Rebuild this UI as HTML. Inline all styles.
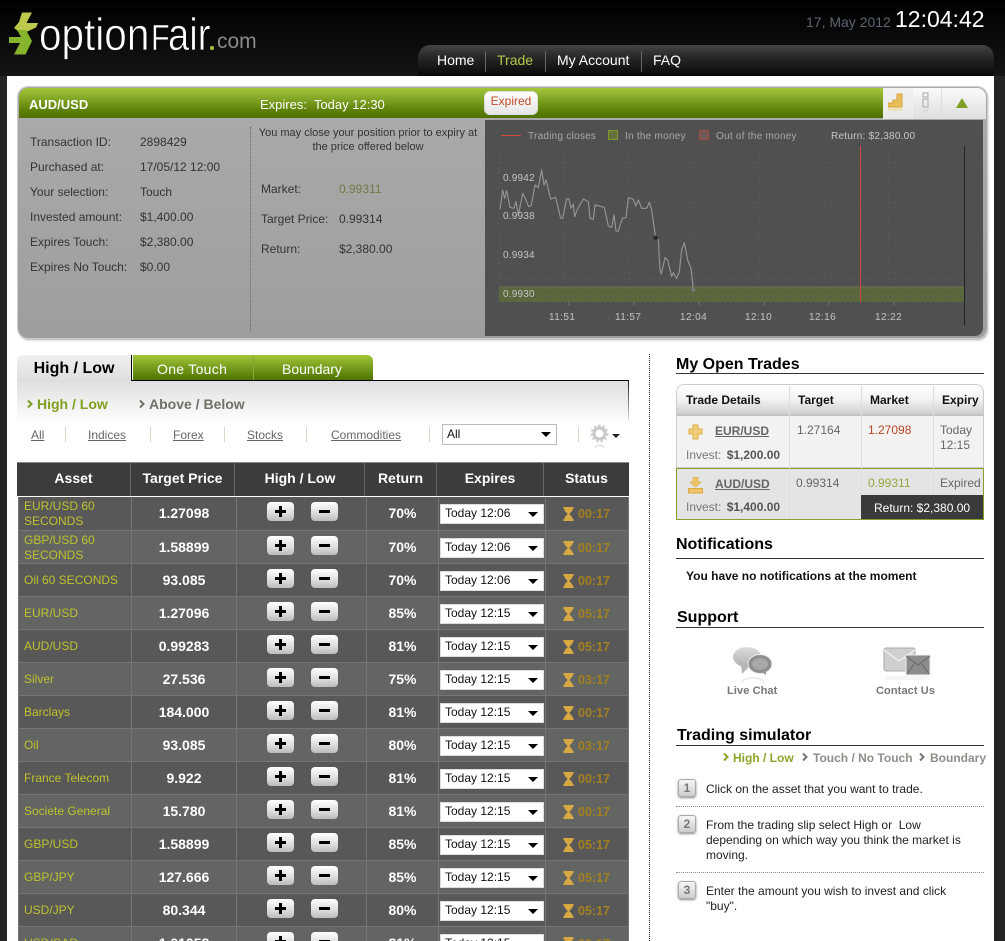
<!DOCTYPE html>
<html><head><meta charset="utf-8"><title>optionFair</title>
<style>
*{box-sizing:border-box}
html,body{margin:0;padding:0;overflow:hidden;width:1005px;height:941px}
body{background:#242424;font-family:"Liberation Sans",sans-serif;font-size:12px;color:#333}
#root{position:relative;width:1005px;height:941px;overflow:hidden;background:#242424}
.a{position:absolute;white-space:nowrap}
#hd{position:absolute;left:0;top:0;width:1005px;height:76px;background:linear-gradient(#000,#141414)}
#nav{position:absolute;left:418px;top:45px;width:576px;height:31px;border-radius:12px 12px 0 0;background:linear-gradient(#444,#2a2a2a 35%,#080808)}
#nav span{position:absolute;top:7px;font-size:14px;color:#fff}
#nav i{position:absolute;top:6px;width:1px;height:21px;background:#666}
#wh{position:absolute;left:7px;top:76px;width:987px;height:865px;background:#fff}
#panel{position:absolute;left:18px;top:87px;width:969px;height:251px;border-radius:10px;background:linear-gradient(#ababab,#9e9e9e);box-shadow:0 0 0 1px #ccc,1px 2px 2px #aaa;overflow:hidden}
#green{position:absolute;left:1px;top:1px;width:864px;height:30px;background:linear-gradient(#a3c739,#8bb02c 25%,#5d8008 75%,#4f6f00);border-radius:9px 0 0 0}
#chart{position:absolute;left:467px;top:33px;width:498px;height:216px;background:#505050;border-radius:0 0 8px 0}
.t1{font-size:12px;color:#333}
h3{position:absolute;margin:0;left:676px;font-size:16px;font-weight:bold;color:#000;line-height:18px;white-space:nowrap}
.rule{position:absolute;left:676px;width:308px;height:1px;background:#333}
#tb{position:absolute;left:17px;top:380px;width:612px;height:82px;background:linear-gradient(#dedede,#f4f4f4 35%,#fff 55%)}
.lnk{position:absolute;top:428px;color:#666;text-decoration:underline;font-size:12px}
.sep{position:absolute;top:427px;width:1px;height:15px;background:#d8d8c8}
#th{position:absolute;left:17px;top:462px;width:612px;height:34px;background:#3c3c3c;border-top:1px solid #888}
#th span{position:absolute;top:7px;color:#fff;font-weight:bold;font-size:14px;text-align:center}
#th i{position:absolute;top:0;width:1px;height:33px;background:#666}
table{position:absolute;left:18px;top:497px;width:610px;border-collapse:collapse;table-layout:fixed}
td{height:33px;padding:0;border:1px solid #757575;border-top:0;vertical-align:middle;position:relative}
tr:nth-child(odd) td{background:#585858}
tr:nth-child(even) td{background:#626562}
.n{color:#bfc22e;font-size:12px;line-height:15px;padding:2px 0 0 5px}
.v{color:#fff;font-weight:bold;font-size:14px;text-align:center}
.r{color:#fff;font-weight:bold;font-size:14px;text-align:center}
.btn{position:absolute;top:5px;width:27px;height:19px;border-radius:4px;background:linear-gradient(#fff,#dcdcdc 60%,#bbb)}
.btn.p{left:30px}.btn.m{left:74px}
.btn:before{content:"";position:absolute;left:8px;top:8px;width:11px;height:3px;background:#000}
.btn.p:after{content:"";position:absolute;left:12px;top:4px;width:3px;height:11px;background:#000}
.s{position:absolute;left:1px;top:7px;width:104px;height:20px;background:#fff;color:#111;font-size:12px;line-height:17px;padding-left:4px;border:1px solid #ddd}
.s:after{content:"";position:absolute;right:5px;top:7px;border:5px solid transparent;border-top:5px solid #000;border-bottom:0}
.hg{position:absolute;left:17px;top:10px;width:11px;height:14px}
.st{position:absolute;left:32px;top:10px;font-size:12.500px;font-weight:bold;color:#a3801f}
.c{position:absolute;color:#666;font-size:12px;white-space:nowrap}
.step{position:absolute;left:678px;width:18px;height:18px;border-radius:3px;border:1px solid #aaa;background:linear-gradient(#f6f6f6,#ccc);box-shadow:0 1px 2px #888;font-size:12px;font-weight:bold;color:#777;text-align:center;line-height:16px}
.stx{position:absolute;left:706px;width:270px;color:#222;font-size:12px;line-height:15px}
.dot{position:absolute;left:676px;width:308px;border-top:1px dotted #888}
.gl{stroke:#5a5a5a;stroke-width:1;stroke-dasharray:2 3;fill:none}
.lg{position:absolute;top:11px;font-size:10px;color:#a4a8ae;line-height:12px;letter-spacing:.25px;white-space:nowrap}
.yl{position:absolute;left:18px;font-size:10px;line-height:12px;color:#c4c4c4;letter-spacing:.2px}
.xl{position:absolute;top:192px;font-size:10px;line-height:12px;color:#c4c4c4;letter-spacing:.4px}
.cv{position:absolute;width:6px;height:8px;overflow:visible}
</style></head><body>
<div id="root">
<svg width="0" height="0" style="position:absolute"><defs><symbol id="hg" viewBox="0 0 11 15"><path d="M0 0H11V2H10C10 5 7 6 6.500 7.500C7 9 10 10 10 13H11V15H0V13H1C1 10 4 9 4.500 7.500C4 6 1 5 1 2H0Z" fill="#d7a844"/></symbol></defs></svg>

<div id="hd">
 <svg class="a" style="left:8px;top:11px" width="34" height="45" viewBox="0 0 34 45"><polygon points="14,1.500 24,1.500 18.500,12 30,12 28,16.500 14,23 6,17 11,11" fill="#bcc94a"/><polygon points="1,26 13,26 9,19 18,19 24,30 17.500,43.500 6,43.500 12,32 1,32" fill="#86b52c"/></svg>
 <div class="a" style="left:39px;top:12px;color:#fff;line-height:46px;font-size:45px;-webkit-text-stroke:.7px #0c0c0c;transform:scaleX(.9);transform-origin:0 0">option</div>
 <div class="a" style="left:151px;top:15px;color:#fff;line-height:46px;font-size:36px;-webkit-text-stroke:.5px #0c0c0c;transform:scaleX(.85);transform-origin:0 0">F</div>
 <div class="a" style="left:168px;top:12px;color:#fff;line-height:46px;font-size:45px;-webkit-text-stroke:.7px #0c0c0c;transform:scaleX(.85);transform-origin:0 0">air</div>
 <div class="a" style="left:210px;top:46px;width:4px;height:4px;background:#a7c83c;border-radius:2px"></div>
 <div class="a" style="left:217px;top:30px;font-size:21px;line-height:24px;color:#8a8a8a">com</div>
 <div class="a" style="left:806px;top:14px;font-size:14px;color:#5c6670">17, May 2012</div>
 <div class="a" style="left:895px;top:5px;font-size:23px;line-height:28px;color:#fff">12:04:42</div>
 <div id="nav"><span style="left:19px">Home</span><i style="left:67px"></i><span style="left:79px;color:#b5c648">Trade</span><i style="left:127px"></i><span style="left:139px">My Account</span><i style="left:223px"></i><span style="left:235px">FAQ</span></div>
</div>
<div id="wh"></div>

<div id="panel">
 <div id="green"></div>
 <div class="a" style="left:11px;top:10px;font-size:13px;font-weight:bold;color:#fff">AUD/USD</div>
 <div class="a" style="left:242px;top:10px;font-size:13px;color:#fff">Expires:&nbsp; Today 12:30</div>
 <div class="a" style="left:466px;top:4px;width:54px;height:24px;background:linear-gradient(#fff,#e6e6e6);border-radius:6px;border:1px solid #ddd;color:#c0492a;font-size:12px;text-align:center;line-height:19px">Expired</div>
 <div class="a" style="left:865px;top:1px;width:103px;height:31px;background:linear-gradient(#fafafa,#dedede);border-radius:0 9px 0 0"></div>
 <div class="a" style="left:865px;top:1px;width:29px;height:31px;background:linear-gradient(#f2f2f2,#e8e8e8)"></div>
 <div class="a" style="left:894px;top:1px;width:1px;height:31px;background:#eee"></div>
 <div class="a" style="left:923px;top:1px;width:1px;height:31px;background:#ddd"></div>
 <svg class="a" style="left:870px;top:5px" width="16" height="22" viewBox="0 0 16 22"><path d="M0 11H5V8H9V2H14V15H0Z" fill="#e9bf5c" stroke="#d6a53a"/><rect x="0" y="16.500" width="14" height="2" fill="#f1dca5"/></svg>
 <svg class="a" style="left:903px;top:5px" width="10" height="24" viewBox="0 0 10 24"><rect x="2" y="1" width="5" height="4" fill="none" stroke="#aaa"/><rect x="2" y="7" width="5" height="8" fill="none" stroke="#aaa"/><rect x="2" y="17" width="5" height="4" fill="#ddd"/></svg>
 <svg class="a" style="left:938px;top:11px" width="12" height="10" viewBox="0 0 12 10"><polygon points="6,0 12,10 0,10" fill="#7fa022"/></svg>

 <div class="a t1" style="left:12px;top:48px">Transaction ID:</div><div class="a t1" style="left:122px;top:48px">2898429</div>
 <div class="a t1" style="left:12px;top:73px">Purchased at:</div><div class="a t1" style="left:122px;top:73px">17/05/12 12:00</div>
 <div class="a t1" style="left:12px;top:98px">Your selection:</div><div class="a t1" style="left:122px;top:98px">Touch</div>
 <div class="a t1" style="left:12px;top:123px">Invested amount:</div><div class="a t1" style="left:122px;top:123px">$1,400.00</div>
 <div class="a t1" style="left:12px;top:148px">Expires Touch:</div><div class="a t1" style="left:122px;top:148px">$2,380.00</div>
 <div class="a t1" style="left:12px;top:173px">Expires No Touch:</div><div class="a t1" style="left:122px;top:173px">$0.00</div>
 <div class="a" style="left:232px;top:40px;height:204px;border-left:1px dotted #666"></div>
 <div class="a" style="left:235px;top:39px;width:230px;text-align:center;font-size:11px;line-height:14px;color:#333;white-space:normal">You may close your position prior to expiry at<br>the price offered below</div>
 <div class="a t1" style="left:243px;top:95px">Market:</div><div class="a t1" style="left:321px;top:95px;color:#6f7a45">0.99311</div>
 <div class="a t1" style="left:243px;top:125px">Target Price:</div><div class="a t1" style="left:321px;top:125px">0.99314</div>
 <div class="a t1" style="left:243px;top:155px">Return:</div><div class="a t1" style="left:321px;top:155px">$2,380.00</div>

 <div id="chart">
 <svg class="a" style="left:0;top:0" width="498" height="216" viewBox="0 0 498 216">
  <g class="gl"><path d="M14 27V182M79 27V182M144 27V182M209 27V182M274 27V182M339 27V182M404 27V182"/><path d="M14 43H478M14 82H478M14 120H478M14 159H478M14 198H478"/></g>
  <rect x="14" y="167" width="465" height="15" fill="#5b673c"/><path d="M14 167H479" stroke="#6c7550"/>
  <path d="M45 172H478M45 177H478" stroke="#444e3e" stroke-dasharray="1 4"/>
  <rect x="16" y="15" width="20" height="1" fill="#d04a3e"/>
  <rect x="123.500" y="10.500" width="9" height="9" fill="#66703f" stroke="#7f9a2a"/>
  <rect x="214.500" y="10.500" width="9" height="9" fill="#6a5a58" stroke="#a8483e"/>
  <path d="M375.500 26V182" stroke="#c8483c"/><path d="M479.500 26V205" stroke="#222"/>
  <path d="M84 182v3M149 182v3M214 182v3M279 182v3M344 182v3M409 182v3" stroke="#777"/>
 </svg>
 <svg class="a" style="left:5px;top:0" width="260" height="215" viewBox="0 0 780 645" preserveAspectRatio="none"><path fill="none" stroke="#949494" stroke-width="3.500" stroke-linejoin="round" d="M30,268 38,210 44,235 50,212 60,262 72,265 78,245 85,285 98,220 108,240 116,260 124,256 135,195 145,203 155,150 162,195 168,180 182,237 197,232 212,295 218,295 230,236 237,237 243,265 250,252 254,290 262,268 280,237 295,245 300,295 310,298 315,255 343,262 355,318 365,322 372,285 378,333 385,333 397,295 408,293 415,233 430,238 437,258 445,240 455,265 470,265 478,247 485,270 497,354 505,360 510,450 514,462 525,413 533,420 545,470 550,458 560,475 568,455 575,390 583,368 593,420 603,445 610,510"/><circle cx="497" cy="354" r="7" fill="#2a2a2a"/><circle cx="610" cy="510" r="6" fill="#777"/></svg>
 <div class="lg" style="left:43px">Trading closes</div>
 <div class="lg" style="left:140px">In the money</div>
 <div class="lg" style="left:231px">Out of the money</div>
 <div class="lg" style="left:346px;color:#c4c8cc">Return: $2,380.00</div>
 <div class="yl" style="top:53px">0.9942</div>
 <div class="yl" style="top:91px">0.9938</div>
 <div class="yl" style="top:130px">0.9934</div>
 <div class="yl" style="top:169px">0.9930</div>
 <div class="xl" style="left:64px">11:51</div>
 <div class="xl" style="left:130px">11:57</div>
 <div class="xl" style="left:195px">12:04</div>
 <div class="xl" style="left:260px">12:10</div>
 <div class="xl" style="left:324px">12:16</div>
 <div class="xl" style="left:390px">12:22</div>
 </div>
</div>

<div id="tb"></div>
<div class="a" style="left:132px;top:380px;width:497px;height:1px;background:#000"></div>
<div class="a" style="left:628px;top:380px;width:1px;height:40px;background:linear-gradient(#111,#ddd)"></div>
<div class="a" style="left:17px;top:355px;width:115px;height:26px;border-radius:6px 0 0 0;background:linear-gradient(#f0f0f0,#dedede);text-align:center;font-size:16px;font-weight:bold;color:#000;line-height:28px;border-right:1px solid #000">High / Low</div>
<div class="a" style="left:133px;top:355px;width:240px;height:25px;border-radius:0 6px 0 0;background:linear-gradient(#a3c739,#7ea422 40%,#4f7300)"></div>
<div class="a" style="left:253px;top:355px;width:1px;height:25px;background:#8aa83a"></div>
<div class="a" style="left:157px;top:361px;font-size:14px;color:#fff;letter-spacing:.3px">One Touch</div>
<div class="a" style="left:282px;top:361px;font-size:14px;color:#fff">Boundary</div>

<svg class="cv" style="left:27px;top:400px" viewBox="0 0 6 8"><path d="M1 0.500L4.500 4 1 7.500" fill="none" stroke="#7f9f1e" stroke-width="2"/></svg>
<div class="a" style="left:37px;top:396px;font-size:14px;font-weight:bold;color:#7f9f1e">High / Low</div>
<svg class="cv" style="left:139px;top:400px" viewBox="0 0 6 8"><path d="M1 0.500L4.500 4 1 7.500" fill="none" stroke="#6e7268" stroke-width="2"/></svg>
<div class="a" style="left:149px;top:396px;font-size:14px;font-weight:bold;color:#6e7268">Above / Below</div>
<div class="lnk" style="left:31px">All</div><div class="sep" style="left:65px"></div>
<div class="lnk" style="left:88px">Indices</div><div class="sep" style="left:150px"></div>
<div class="lnk" style="left:173px">Forex</div><div class="sep" style="left:224px"></div>
<div class="lnk" style="left:247px">Stocks</div><div class="sep" style="left:306px"></div>
<div class="lnk" style="left:331px">Commodities</div><div class="sep" style="left:429px"></div>
<div class="s" style="left:442px;top:424px;width:115px;height:21px;border:1px solid #bbb;padding-left:4px;line-height:19px">All</div>
<div class="sep" style="left:578px"></div>
<svg class="a" style="left:590px;top:424px" width="19" height="26" viewBox="0 0 19 26"><circle cx="9.500" cy="9.500" r="5.500" fill="none" stroke="#c8c8c8" stroke-width="3"/><circle cx="9.500" cy="9.500" r="8" fill="none" stroke="#cfcfcf" stroke-width="2" stroke-dasharray="2.500 2"/><path d="M5 24a5 5 0 0 1 9 0" fill="none" stroke="#e8e8e8" stroke-width="2"/></svg>
<div class="a" style="left:612px;top:434px;border:4px solid transparent;border-top:4px solid #222;border-bottom:0"></div>

<div id="th">
 <span style="left:0;width:113px">Asset</span><i style="left:113px"></i>
 <span style="left:114px;width:103px">Target Price</span><i style="left:217px"></i>
 <span style="left:218px;width:130px">High / Low</span><i style="left:347px"></i>
 <span style="left:348px;width:71px">Return</span><i style="left:419px"></i>
 <span style="left:420px;width:106px">Expires</span><i style="left:526px"></i>
 <span style="left:527px;width:85px">Status</span>
</div>

<table><colgroup><col style="width:113px"><col style="width:105px"><col style="width:130px"><col style="width:72px"><col style="width:107px"><col style="width:83px"></colgroup><tbody>
<tr><td class="n">EUR/USD 60<br>SECONDS</td><td class="v">1.27098</td><td><div class="btn p"></div><div class="btn m"></div></td><td class="r">70%</td><td><div class="s">Today 12:06</div></td><td><svg class="hg"><use href="#hg"/></svg><span class="st">00:17</span></td></tr>
<tr><td class="n">GBP/USD 60<br>SECONDS</td><td class="v">1.58899</td><td><div class="btn p"></div><div class="btn m"></div></td><td class="r">70%</td><td><div class="s">Today 12:06</div></td><td><svg class="hg"><use href="#hg"/></svg><span class="st">00:17</span></td></tr>
<tr><td class="n">Oil 60 SECONDS</td><td class="v">93.085</td><td><div class="btn p"></div><div class="btn m"></div></td><td class="r">70%</td><td><div class="s">Today 12:06</div></td><td><svg class="hg"><use href="#hg"/></svg><span class="st">00:17</span></td></tr>
<tr><td class="n">EUR/USD</td><td class="v">1.27096</td><td><div class="btn p"></div><div class="btn m"></div></td><td class="r">85%</td><td><div class="s">Today 12:15</div></td><td><svg class="hg"><use href="#hg"/></svg><span class="st">05:17</span></td></tr>
<tr><td class="n">AUD/USD</td><td class="v">0.99283</td><td><div class="btn p"></div><div class="btn m"></div></td><td class="r">81%</td><td><div class="s">Today 12:15</div></td><td><svg class="hg"><use href="#hg"/></svg><span class="st">05:17</span></td></tr>
<tr><td class="n">Silver</td><td class="v">27.536</td><td><div class="btn p"></div><div class="btn m"></div></td><td class="r">75%</td><td><div class="s">Today 12:15</div></td><td><svg class="hg"><use href="#hg"/></svg><span class="st">03:17</span></td></tr>
<tr><td class="n">Barclays</td><td class="v">184.000</td><td><div class="btn p"></div><div class="btn m"></div></td><td class="r">81%</td><td><div class="s">Today 12:15</div></td><td><svg class="hg"><use href="#hg"/></svg><span class="st">00:17</span></td></tr>
<tr><td class="n">Oil</td><td class="v">93.085</td><td><div class="btn p"></div><div class="btn m"></div></td><td class="r">80%</td><td><div class="s">Today 12:15</div></td><td><svg class="hg"><use href="#hg"/></svg><span class="st">03:17</span></td></tr>
<tr><td class="n">France Telecom</td><td class="v">9.922</td><td><div class="btn p"></div><div class="btn m"></div></td><td class="r">81%</td><td><div class="s">Today 12:15</div></td><td><svg class="hg"><use href="#hg"/></svg><span class="st">00:17</span></td></tr>
<tr><td class="n">Societe General</td><td class="v">15.780</td><td><div class="btn p"></div><div class="btn m"></div></td><td class="r">81%</td><td><div class="s">Today 12:15</div></td><td><svg class="hg"><use href="#hg"/></svg><span class="st">00:17</span></td></tr>
<tr><td class="n">GBP/USD</td><td class="v">1.58899</td><td><div class="btn p"></div><div class="btn m"></div></td><td class="r">85%</td><td><div class="s">Today 12:15</div></td><td><svg class="hg"><use href="#hg"/></svg><span class="st">05:17</span></td></tr>
<tr><td class="n">GBP/JPY</td><td class="v">127.666</td><td><div class="btn p"></div><div class="btn m"></div></td><td class="r">85%</td><td><div class="s">Today 12:15</div></td><td><svg class="hg"><use href="#hg"/></svg><span class="st">05:17</span></td></tr>
<tr><td class="n">USD/JPY</td><td class="v">80.344</td><td><div class="btn p"></div><div class="btn m"></div></td><td class="r">80%</td><td><div class="s">Today 12:15</div></td><td><svg class="hg"><use href="#hg"/></svg><span class="st">05:17</span></td></tr>
<tr><td class="n">USD/CAD</td><td class="v">1.01058</td><td><div class="btn p"></div><div class="btn m"></div></td><td class="r">81%</td><td><div class="s">Today 12:15</div></td><td><svg class="hg"><use href="#hg"/></svg><span class="st">00:17</span></td></tr>
</tbody></table>

<div class="a" style="left:649px;top:354px;height:587px;border-left:1px dotted #222"></div>

<h3 style="top:356px">My Open Trades</h3><div class="rule" style="top:373px"></div>
<div class="a" style="left:676px;top:384px;width:308px;height:30px;border:1px solid #ccc;border-bottom:0;border-radius:8px 8px 0 0;background:linear-gradient(#fff,#f2f2f2 50%,#cfcfcf)"></div>
<div class="a" style="left:676px;top:414px;width:308px;height:2px;background:#c4c4c4"></div>
<div class="a" style="left:676px;top:416px;width:308px;height:52px;background:#f2f2f0;border:1px solid #ccc;border-top:0"></div>
<div class="a" style="left:676px;top:468px;width:308px;height:52px;background:#e4e4e4;border:1px solid #83a126"></div>
<div class="a" style="left:789px;top:386px;width:1px;height:133px;background:#ddd"></div>
<div class="a" style="left:861px;top:386px;width:1px;height:110px;background:#ddd"></div>
<div class="a" style="left:933px;top:386px;width:1px;height:110px;background:#ddd"></div>
<div class="a" style="left:686px;top:393px;font-weight:bold;color:#111;font-size:12px">Trade Details</div>
<div class="a" style="left:798px;top:393px;font-weight:bold;color:#111;font-size:12px">Target</div>
<div class="a" style="left:870px;top:393px;font-weight:bold;color:#111;font-size:12px">Market</div>
<div class="a" style="left:942px;top:393px;font-weight:bold;color:#111;font-size:12px">Expiry</div>
<svg class="a" style="left:688px;top:424px" width="15" height="16" viewBox="0 0 15 16"><path d="M5 1H10V5H14V10H10V15H5V10H1V5H5Z" fill="#f1cd78" stroke="#dfae4b"/></svg>
<div class="a" style="left:715px;top:424px;color:#666;font-weight:bold;text-decoration:underline">EUR/USD</div>
<div class="a" style="left:686px;top:448px;color:#777">Invest: <b style="color:#555;margin-left:2px">$1,200.00</b></div>
<div class="c" style="left:797px;top:423px">1.27164</div>
<div class="c" style="left:868px;top:423px;color:#b8442a">1.27098</div>
<div class="c" style="left:940px;top:423px;line-height:15px">Today<br>12:15</div>
<svg class="a" style="left:688px;top:477px" width="15" height="17" viewBox="0 0 15 17"><path d="M5 0H10V5H13L7.500 10 2 5H5Z" fill="#eec468" stroke="#dba93f" stroke-width=".6"/><rect x="0.500" y="11.500" width="14" height="4.500" fill="#eec468" stroke="#dba93f"/></svg>
<div class="a" style="left:715px;top:477px;color:#666;font-weight:bold;text-decoration:underline">AUD/USD</div>
<div class="a" style="left:686px;top:500px;color:#777">Invest: <b style="color:#555;margin-left:2px">$1,400.00</b></div>
<div class="c" style="left:796px;top:476px">0.99314</div>
<div class="c" style="left:868px;top:476px;color:#9aa340">0.99311</div>
<div class="c" style="left:940px;top:476px">Expired</div>
<div class="a" style="left:861px;top:495px;width:122px;height:24px;background:#3a3a3a;color:#fff;font-size:12px;line-height:27px;padding-left:13px">Return: $2,380.00</div>

<h3 style="top:536px">Notifications</h3><div class="rule" style="top:558px"></div>
<div class="a" style="left:686px;top:569px;font-weight:bold;color:#111;font-size:12px">You have no notifications at the moment</div>

<h3 style="top:609px;left:677px">Support</h3><div class="rule" style="top:627px"></div>
<svg class="a" style="left:733px;top:647px" width="40" height="37" viewBox="0 0 40 37"><defs><linearGradient id="bb1" x1="0" y1="0" x2="0" y2="1"><stop offset="0" stop-color="#dcdcdc"/><stop offset="1" stop-color="#b0b0b0"/></linearGradient></defs><ellipse cx="14" cy="10" rx="14" ry="10" fill="url(#bb1)"/><path d="M8 18L9 27 16 20Z" fill="#b8b8b8"/><ellipse cx="27" cy="17" rx="12" ry="9.500" fill="#8f8f8f" stroke="#eee"/><ellipse cx="27" cy="17" rx="8" ry="6" fill="#a8a8a8"/><path d="M28 25L33 28 33 24Z" fill="#999"/><path d="M9 36a11 5 0 0 1 22 0" fill="none" stroke="#eee" stroke-width="2"/></svg>
<svg class="a" style="left:883px;top:647px" width="49" height="34" viewBox="0 0 49 34"><rect x="1" y="1" width="31" height="23" rx="2" fill="#cfcfcf" stroke="#aaa"/><path d="M1 3L16 14 32 3" fill="none" stroke="#eee" stroke-width="1.500"/><rect x="23" y="8" width="24" height="20" fill="#8c8c8c" stroke="#eee"/><path d="M23 9L35 18 47 9M24 27L31 17M46 27L39 17" fill="none" stroke="#666"/><rect x="2" y="29" width="44" height="4" fill="#f6f6f6"/></svg>
<div class="a" style="left:727px;top:685px;font-size:11px;font-weight:bold;color:#777;letter-spacing:.1px">Live Chat</div>
<div class="a" style="left:876px;top:685px;font-size:11px;font-weight:bold;color:#777;letter-spacing:.1px">Contact Us</div>

<h3 style="top:727px;left:677px">Trading simulator</h3><div class="rule" style="top:745px"></div>
<svg class="cv" style="left:723px;top:753px" viewBox="0 0 6 8"><path d="M1 0.500L4.500 4 1 7.500" fill="none" stroke="#8aa72a" stroke-width="2"/></svg>
<div class="a" style="left:733px;top:751px;font-size:12px;font-weight:bold;color:#8aa72a">High / Low</div>
<svg class="cv" style="left:802px;top:753px" viewBox="0 0 6 8"><path d="M1 0.500L4.500 4 1 7.500" fill="none" stroke="#777" stroke-width="2"/></svg>
<div class="a" style="left:813px;top:751px;font-size:12px;font-weight:bold;color:#8a9088">Touch / No Touch</div>
<svg class="cv" style="left:919px;top:753px" viewBox="0 0 6 8"><path d="M1 0.500L4.500 4 1 7.500" fill="none" stroke="#777" stroke-width="2"/></svg>
<div class="a" style="left:930px;top:751px;font-size:12px;font-weight:bold;color:#8a9088">Boundary</div>
<div class="step" style="top:779px">1</div><div class="stx" style="top:782px">Click on the asset that you want to trade.</div>
<div class="dot" style="top:806px"></div>
<div class="step" style="top:815px">2</div><div class="stx" style="top:818px">From the trading slip select High or&nbsp; Low<br>depending on which way you think the market is<br>moving.</div>
<div class="dot" style="top:872px"></div>
<div class="step" style="top:881px">3</div><div class="stx" style="top:884px">Enter the amount you wish to invest and click<br>"buy".</div>
</div>
</body></html>
